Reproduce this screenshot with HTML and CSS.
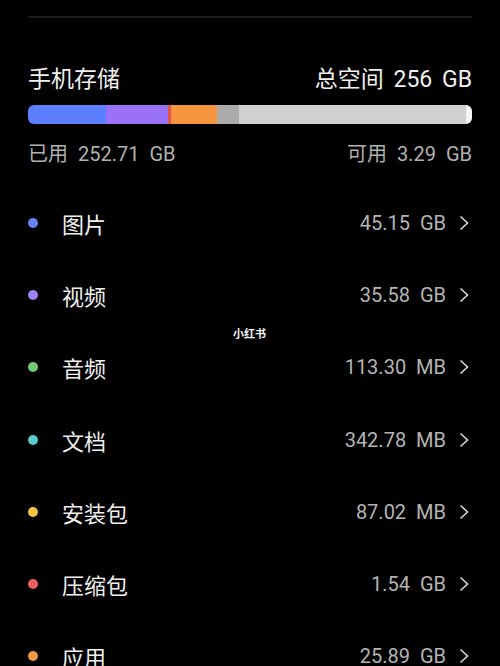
FILE: index.html
```html
<!DOCTYPE html>
<html lang="zh-CN">
<head>
  <meta charset="UTF-8" />
  <meta name="viewport" content="width=device-width, initial-scale=1.0" />
  <title>手机存储</title>
  <link rel="stylesheet" href="styles.css">
</head>
<body>
  <div class="page">
    <div class="divider"></div>

    <div class="header">
      <span class="title">手机存储</span>
      <span class="title">总空间 <span class="num">256</span> GB</span>
    </div>

    <div class="bar">
      <div class="seg seg-img"></div>
      <div class="seg seg-video"></div>
      <div class="seg seg-zip"></div>
      <div class="seg seg-app"></div>
      <div class="seg seg-sys"></div>
      <div class="seg seg-free"></div>
      <div class="seg seg-end"></div>
    </div>

    <div class="legend">
      <span>已用 <span class="num">252.71</span> GB</span>
      <span>可用 <span class="num">3.29</span> GB</span>
    </div>

    <ul class="list">
      <li class="row"><i class="dot blue"></i><span class="label">图片</span><span class="value">45.15 GB</span><svg class="chev" viewBox="0 0 10 16"><polyline points="1.5,1.5 8.5,8 1.5,14.5" /></svg></li>
      <li class="row"><i class="dot purple"></i><span class="label">视频</span><span class="value">35.58 GB</span><svg class="chev" viewBox="0 0 10 16"><polyline points="1.5,1.5 8.5,8 1.5,14.5" /></svg></li>
      <li class="row"><i class="dot green"></i><span class="label">音频</span><span class="value">113.30 MB</span><svg class="chev" viewBox="0 0 10 16"><polyline points="1.5,1.5 8.5,8 1.5,14.5" /></svg></li>
      <li class="row"><i class="dot teal"></i><span class="label">文档</span><span class="value">342.78 MB</span><svg class="chev" viewBox="0 0 10 16"><polyline points="1.5,1.5 8.5,8 1.5,14.5" /></svg></li>
      <li class="row"><i class="dot yellow"></i><span class="label">安装包</span><span class="value">87.02 MB</span><svg class="chev" viewBox="0 0 10 16"><polyline points="1.5,1.5 8.5,8 1.5,14.5" /></svg></li>
      <li class="row"><i class="dot red"></i><span class="label">压缩包</span><span class="value">1.54 GB</span><svg class="chev" viewBox="0 0 10 16"><polyline points="1.5,1.5 8.5,8 1.5,14.5" /></svg></li>
      <li class="row"><i class="dot orange"></i><span class="label">应用</span><span class="value">25.89 GB</span><svg class="chev" viewBox="0 0 10 16"><polyline points="1.5,1.5 8.5,8 1.5,14.5" /></svg></li>
    </ul>
  </div>

  <div class="watermark">小红书</div>
</body>
</html>
```

FILE: styles.css
```css
* {
  box-sizing: border-box;
}
html, body {
  margin: 0;
  padding: 0;
  height: 100%;
  background: #000;
  overflow: hidden;
  font-family: "Roboto", "Noto Sans CJK SC", sans-serif;
}

.page {
  padding: 16px 28px 0;
}

.divider {
  height: 2px;
  background: #1c1c1c;
}

.header {
  display: flex;
  justify-content: space-between;
  align-items: center;
  margin-top: 45px;
  height: 28px;
}
.title {
  font-size: 23px;
  color: #f0f0f0;
  word-spacing: 4px;
}

.bar {
  display: flex;
  height: 19px;
  margin-top: 14px;
  border-radius: 6px;
  overflow: hidden;
}
.seg-img { flex: 0 0 78px; background: #5b7fff; }
.seg-video { flex: 0 0 62px; background: #9a72f9; }
.seg-zip { flex: 0 0 3px; background: #e0554a; }
.seg-app { flex: 0 0 46px; background: #f7953e; }
.seg-sys { flex: 0 0 22px; background: #ababab; }
.seg-free { flex: 1; background: #d0d0d0; }
.seg-end { flex: 0 0 6px; background: #f4f4f4; }

.legend {
  display: flex;
  justify-content: space-between;
  align-items: center;
  height: 24px;
  margin-top: 16px;
  font-size: 20px;
  color: #b0b0b0;
  word-spacing: 5px;
}

.list {
  list-style: none;
  margin: 23px 0 0;
  padding: 0;
}
.row {
  display: flex;
  align-items: center;
  height: 72.2px;
}
.dot {
  width: 10px;
  height: 10px;
  border-radius: 50%;
  margin-right: 24px;
}
.dot.blue { background: #6584f5; }
.dot.purple { background: #9c82f2; }
.dot.green { background: #74c978; }
.dot.teal { background: #5bcbcb; }
.dot.yellow { background: #f6c443; }
.dot.red { background: #e8605d; }
.dot.orange { background: #f39847; }

.label {
  flex: 1;
  font-size: 22px;
  color: #efefef;
}
.value {
  font-size: 20px;
  color: #b4b4b4;
  word-spacing: 5px;
}
.chev {
  width: 10px;
  height: 16px;
  margin: 0 3px 0 13px;
  fill: none;
  stroke: #d8d8d8;
  stroke-width: 1.6;
}

.watermark {
  position: absolute;
  left: 233px;
  top: 325px;
  font-size: 11px;
  font-weight: bold;
  color: #f4f4f4;
  font-family: "Noto Sans CJK SC", sans-serif;
}
```
